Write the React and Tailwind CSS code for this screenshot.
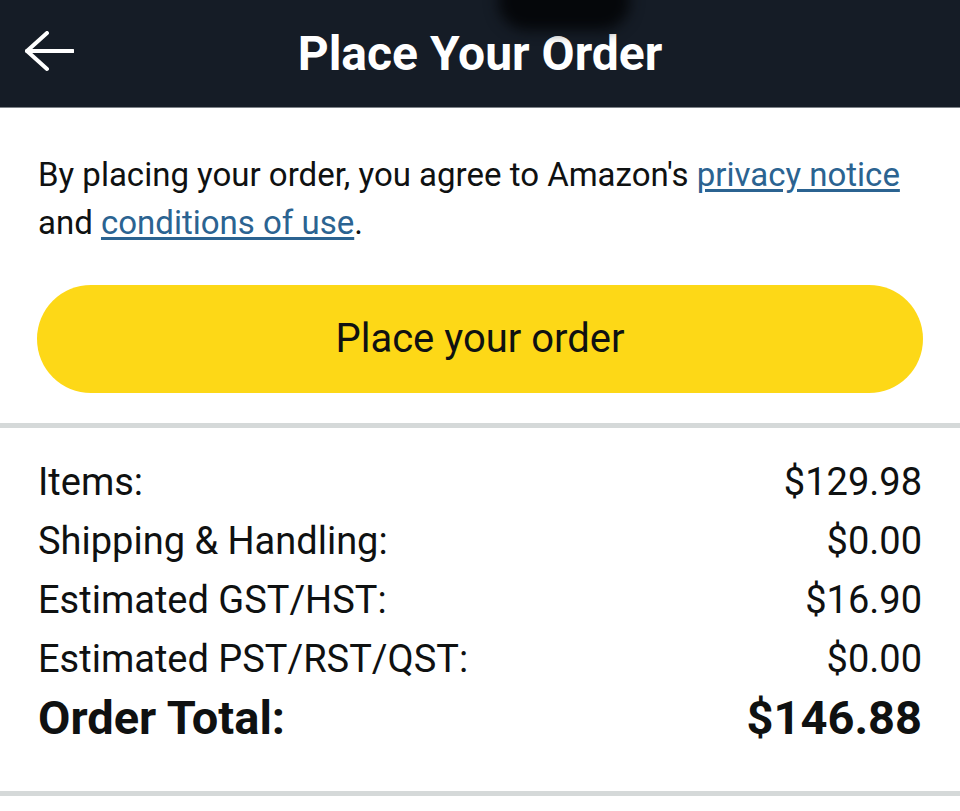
import React from 'react';

const rows = [
  { label: 'Items:', amount: '$129.98' },
  { label: 'Shipping & Handling:', amount: '$0.00' },
  { label: 'Estimated GST/HST:', amount: '$16.90' },
  { label: 'Estimated PST/RST/QST:', amount: '$0.00' },
];

const BackArrow = () => (
  <svg width="60" height="44" viewBox="0 0 60 44" fill="none" stroke="white" strokeWidth="4" strokeLinecap="round" strokeLinejoin="round">
    <path d="M13 20 L59 20" />
    <path d="M33 2 L13 20 L33 38" />
  </svg>
);

const App = () => {
  return (
    <div className="relative w-[960px] h-[811px] bg-white overflow-hidden text-[#0f1111]" style={{ fontFamily: 'Roboto, "Noto Sans", sans-serif' }}>
      {/* camera notch shadow */}
      <div className="absolute z-10 left-[498px] top-[-28px] w-[132px] h-[58px] rounded-full bg-[#05070a] blur-[7px]"></div>

      <header className="h-[108px] bg-[#151c26] border-b border-[#7d8288] flex items-center relative">
        <div className="absolute left-[14px] top-[31px]">
          <BackArrow />
        </div>
        <h1 className="w-full text-center text-white font-bold text-[48px] leading-none">Place Your Order</h1>
      </header>

      <p className="px-[38px] pt-[43px] text-[33px] leading-[48px]">
        By placing your order, you agree to Amazon's{' '}
        <a className="text-[#2b6391] underline underline-offset-[3px]">privacy notice</a> and{' '}
        <a className="text-[#2b6391] underline underline-offset-[3px]">conditions of use</a>.
      </p>

      <div className="px-[37px] mt-[38px]">
        <button className="w-full h-[108px] rounded-full bg-[#fdd817] text-[40px] text-[#0f1111]">Place your order</button>
      </div>

      <div className="mt-[30px] h-[5px] bg-[#d5d9d9]"></div>

      <div className="px-[38px] pt-[25px]">
        {rows.map((r) => (
          <div key={r.label} className="flex justify-between items-center h-[59px] text-[38px]">
            <span>{r.label}</span>
            <span>{r.amount}</span>
          </div>
        ))}
        <div className="flex justify-between items-center h-[59px] text-[47px] font-bold">
          <span>Order Total:</span>
          <span>$146.88</span>
        </div>
      </div>

      <div className="mt-[43px] h-[5px] bg-[#d5d9d9]"></div>
    </div>
  );
};

export default App;
